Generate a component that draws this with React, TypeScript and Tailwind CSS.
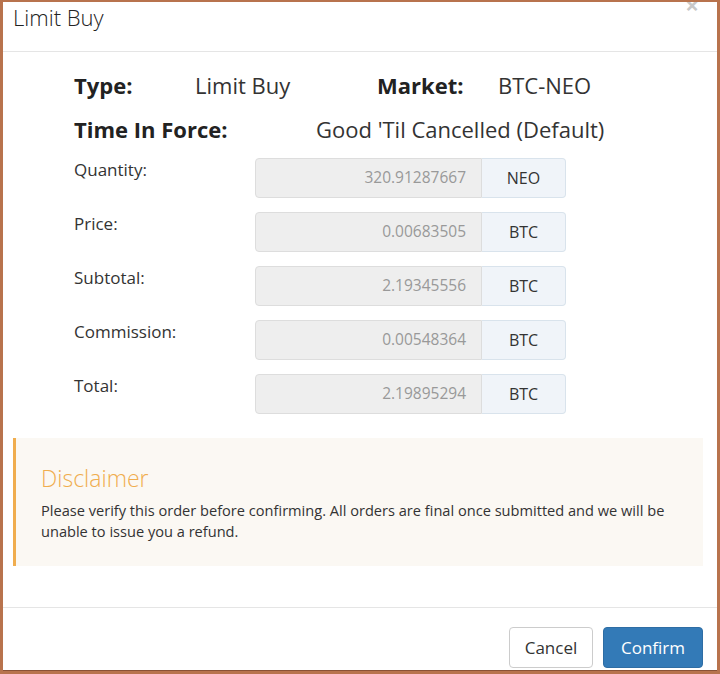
import React from 'react';

const rows = [
    { label: 'Quantity:', value: '320.91287667', unit: 'NEO' },
    { label: 'Price:', value: '0.00683505', unit: 'BTC' },
    { label: 'Subtotal:', value: '2.19345556', unit: 'BTC' },
    { label: 'Commission:', value: '0.00548364', unit: 'BTC' },
    { label: 'Total:', value: '2.19895294', unit: 'BTC' },
];

const App: React.FC = () => {
    return (
        <div
            className="w-[720px] h-[674px] bg-[#b8734d] pt-[2px] px-[3px] pb-[3px] text-[#333333]"
            style={{ fontFamily: '"Open Sans", "Liberation Sans", sans-serif' }}
        >
            <div className="relative h-full bg-white flex flex-col overflow-hidden border-b border-[#8a5236]">
                {/* Close */}
                <span className="absolute right-[18px] -top-[9px] text-[24px] font-bold leading-[24px] text-[#c8c8c8]">×</span>

                {/* Header */}
                <div className="h-[50px] shrink-0 border-b border-[#e5e5e5] pl-[10px]">
                    <h4 className="text-[22px] font-light leading-[30px] text-[#222222]">Limit Buy</h4>
                </div>

                {/* Body */}
                <div className="flex-1 pt-[18px] pl-[10px] pr-[14px]">
                    <div className="pl-[61px]">
                        <div className="flex text-[22px] leading-[30px] h-[44px]">
                            <span className="w-[121px] font-bold text-[#222]">Type:</span>
                            <span className="w-[182px]">Limit Buy</span>
                            <span className="w-[121px] font-bold text-[#222]">Market:</span>
                            <span>BTC-NEO</span>
                        </div>
                        <div className="flex text-[22px] leading-[30px] h-[44px]">
                            <span className="w-[242px] font-bold text-[#222]">Time In Force:</span>
                            <span>Good 'Til Cancelled (Default)</span>
                        </div>

                        <div className="flex flex-col gap-[14px]">
                            {rows.map(r => (
                                <div key={r.label} className="flex items-start h-[40px]">
                                    <label className="w-[181px] text-[17px] leading-[18px] pt-[3px]">{r.label}</label>
                                    <div className="w-[227px] h-[40px] bg-[#eeeeee] border border-[#dddddd] rounded-l-[4px] flex items-center justify-end pr-[15px] text-[15.5px] text-[#999999]">
                                        {r.value}
                                    </div>
                                    <div className="w-[84px] h-[40px] bg-[#f0f4f9] border border-l-0 border-[#d9e3ec] rounded-r-[4px] flex items-center justify-center text-[16px] text-[#333]">
                                        {r.unit}
                                    </div>
                                </div>
                            ))}
                        </div>
                    </div>

                    {/* Disclaimer */}
                    <div className="mt-[24px] h-[128px] bg-[#fbf8f3] border-l-[3px] border-[#f0ad4e] pl-[25px] pr-[20px] pt-[24px]">
                        <h4 className="text-[23px] font-light leading-[32px] text-[#f0ad4e]">Disclaimer</h4>
                        <p className="mt-[6px] text-[14.6px] leading-[21px] text-[#333]">
                            Please verify this order before confirming. All orders are final once submitted and we will be unable to issue you a refund.
                        </p>
                    </div>
                </div>

                {/* Footer */}
                <div className="shrink-0 h-[63px] border-t border-[#e5e5e5] pt-[19px] pr-[14px] flex justify-end items-start gap-[10px]">
                    <button className="w-[84px] h-[41px] rounded-[4px] border border-[#cccccc] bg-white text-[17px] text-[#333]">Cancel</button>
                    <button className="w-[100px] h-[41px] rounded-[4px] border border-[#2e6da4] bg-[#337ab7] text-[17px] text-white">Confirm</button>
                </div>
            </div>
        </div>
    );
};

export default App;
